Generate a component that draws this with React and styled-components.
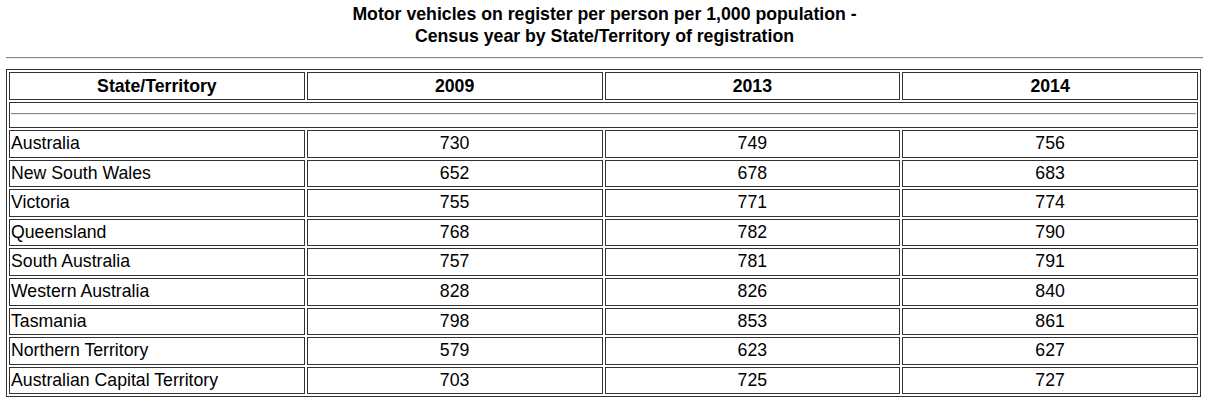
import React from "react";
import styled, { createGlobalStyle } from "styled-components";

const rows = [
  ["Australia", 730, 749, 756],
  ["New South Wales", 652, 678, 683],
  ["Victoria", 755, 771, 774],
  ["Queensland", 768, 782, 790],
  ["South Australia", 757, 781, 791],
  ["Western Australia", 828, 826, 840],
  ["Tasmania", 798, 853, 861],
  ["Northern Territory", 579, 623, 627],
  ["Australian Capital Territory", 703, 725, 727],
];

const GlobalStyle = createGlobalStyle`
  html, body {
    margin: 0;
    padding: 0;
    background: #fff;
    color: #000;
    font-family: "Liberation Sans", Arial, sans-serif;
  }
`;

const Page = styled.div`
  padding: 0 2px 0 6px;
  width: 1197px;
`;

const Title = styled.h1`
  margin: 3px 0 0;
  font-size: 17.7px;
  line-height: 22px;
  font-weight: bold;
  text-align: center;
`;

const Rule = styled.hr`
  margin: 10px 0 10px;
  height: 0;
  border: 0;
  border-top: 1px solid #8a8a8a;
  border-bottom: 1px solid #eaeaea;
`;

const Table = styled.table`
  width: 1195px;
  border: 1px solid #333;
  border-collapse: separate;
  border-spacing: 2px;
  table-layout: fixed;
  font-size: 17.7px;
`;

const Head = styled.th`
  border: 1px solid #333;
  padding: 4px 1px;
  line-height: 18px;
  font-weight: bold;
  text-align: center;
`;

const Cell = styled.td`
  border: 1px solid #333;
  padding: 4px 1px;
  line-height: 17.6px;
  text-align: ${({ $left }) => ($left ? "left" : "center")};
`;

const DividerCell = styled.td`
  border: 1px solid #333;
  padding: 0 1px;
`;

const InnerRule = styled.hr`
  margin: 10px 0 12px;
  height: 0;
  border: 0;
  border-top: 1px solid #8a8a8a;
  border-bottom: 1px solid #eaeaea;
`;

export default function App() {
  return (
    <>
      <GlobalStyle />
      <Page>
        <Title>
          Motor vehicles on register per person per 1,000 population -
          <br />
          Census year by State/Territory of registration
        </Title>
        <Rule />
        <Table>
          <thead>
            <tr>
              <Head>State/Territory</Head>
              <Head>2009</Head>
              <Head>2013</Head>
              <Head>2014</Head>
            </tr>
          </thead>
          <tbody>
            <tr>
              <DividerCell colSpan={4}>
                <InnerRule />
              </DividerCell>
            </tr>
            {rows.map(([name, a, b, c]) => (
              <tr key={name}>
                <Cell $left>{name}</Cell>
                <Cell>{a}</Cell>
                <Cell>{b}</Cell>
                <Cell>{c}</Cell>
              </tr>
            ))}
          </tbody>
        </Table>
      </Page>
    </>
  );
}
